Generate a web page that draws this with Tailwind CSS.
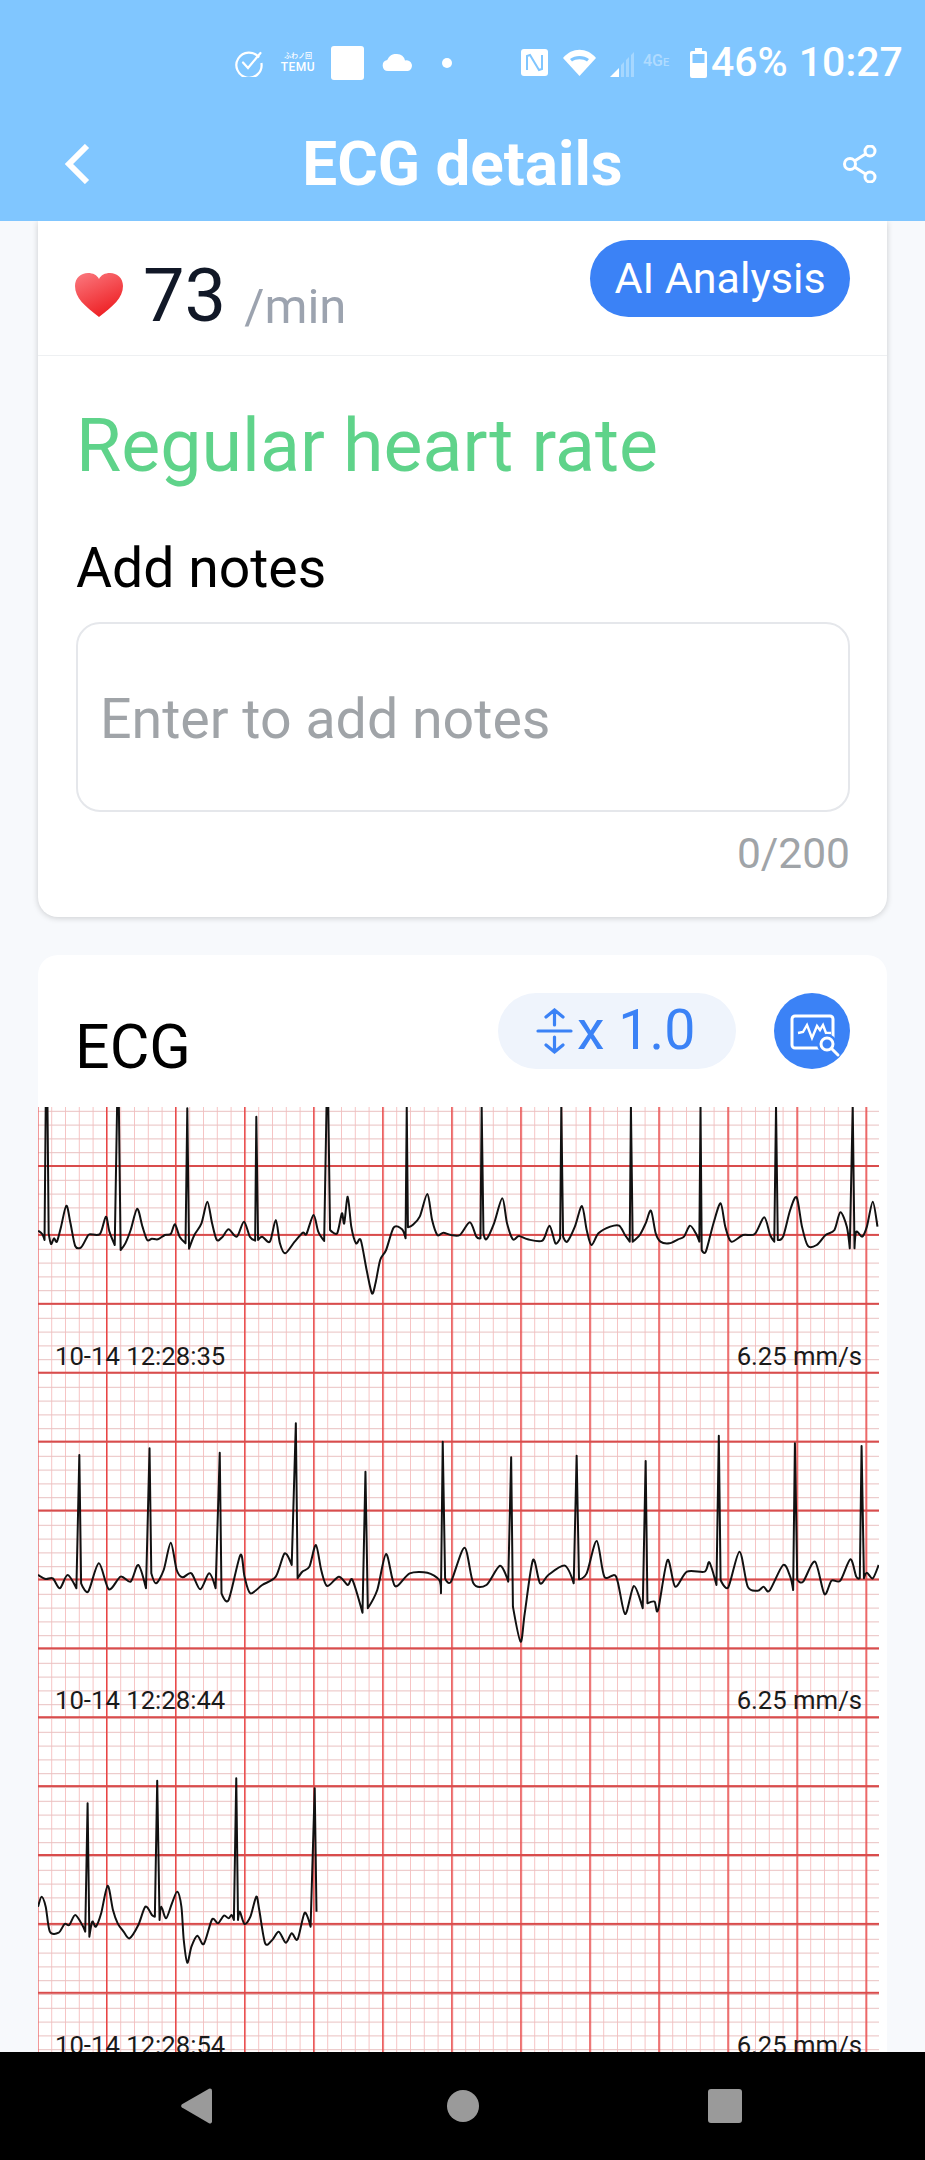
<!DOCTYPE html>
<html>
<head>
<meta charset="utf-8">
<script src="https://cdn.jsdelivr.net/npm/@tailwindcss/browser@4"></script>
</head>
<body class="m-0">
<div class="w-[925px] h-[2160px] flex flex-col overflow-hidden bg-[#f7f9fc] font-['Roboto',sans-serif]">

  <!-- status + app bar -->
  <header class="relative z-10 h-[221px] shrink-0 bg-[#80c6ff] text-white">
    <div class="h-[100px] pt-[25px] pl-[235px] flex items-center">
      <svg class="w-[28px] h-[28px]" viewBox="0 0 28 28" fill="none" stroke="white" stroke-width="2.2"><path d="M24 8.500A12.600 12.600 0 1 0 26.400 14"/><path d="M8 13.500l5 5.500L25.500 4" stroke-linecap="round"/></svg>
      <div class="ml-[18px] w-[34px] flex flex-col items-center font-medium leading-none">
        <span class="text-[7px] h-[9px] font-['Noto_Sans_CJK_JP',sans-serif] whitespace-nowrap">ふわノ回</span>
        <span class="text-[12px] tracking-[0.5px]">TEMU</span>
      </div>
      <div class="ml-[16px] w-[33px] h-[34px] bg-white rounded-[3px]"></div>
      <svg class="ml-[18px] w-[31px] h-[17px]" viewBox="0 0 31 17" fill="white"><path d="M6 17a5.500 5.500 0 0 1-.8-10.900A9 9 0 0 1 15 0a8.500 8.500 0 0 1 8 6.500A5.300 5.300 0 0 1 26 17z"/></svg>
      <div class="ml-[29px] w-[10px] h-[10px] rounded-full bg-white"></div>
      <svg class="ml-[69px] w-[27px] h-[27px]" viewBox="0 0 27 27"><rect width="27" height="27" rx="3" fill="white"/><path d="M6 21V7l3-1 9 15 3-1V6" fill="none" stroke="#80c6ff" stroke-width="2"/></svg>
      <svg class="ml-[15px] w-[33px] h-[27px]" viewBox="0 0 33 27" fill="white"><path d="M16.500 27 0 9C9-2 24-2 33 9z"/><path d="M7 10c5-4 14-4 19 0l-2 2.500c-4-3-11-3-15 0z" fill="#80c6ff"/></svg>
      <svg class="ml-[14px] w-[28px] h-[28px]" viewBox="0 0 28 28" fill="white"><path d="M0 28l9-9v9z"/><path d="M11 16l3-3v15h-3zM16 11l3-3v20h-3zM21 6l3-3v25h-3z" opacity=".3"/></svg>
      <span class="ml-[5px] w-[33px] h-[28px] text-[16px] leading-[24px] font-medium text-white/40 whitespace-nowrap">4G<span class="text-[11px]">E</span></span>
      <svg class="ml-[14px] w-[17px] h-[30px]" viewBox="0 0 17 30" fill="white"><path d="M5 0h7v3h3a2 2 0 0 1 2 2v23a2 2 0 0 1-2 2H2a2 2 0 0 1-2-2V5a2 2 0 0 1 2-2h3z"/><rect x="2.500" y="6" width="12" height="9" fill="#80c6ff"/></svg>
      <span class="ml-[4px] text-[41px] leading-none font-medium">46%</span>
      <span class="ml-[11px] text-[41px] leading-none font-medium">10:27</span>
    </div>
    <div class="h-[121px] pt-[7px] grid grid-cols-[1fr_auto_1fr] items-center">
      <div class="pl-[64px]">
        <svg class="w-[26px] h-[40px] block" viewBox="0 0 26 40" fill="none" stroke="white" stroke-width="6"><path d="M23 2 5 20l18 18"/></svg>
      </div>
      <h1 class="text-[62px] leading-none font-bold">ECG details</h1>
      <div class="flex justify-end pr-[48px]">
        <svg class="w-[34px] h-[38px] block" viewBox="0 0 34 38" fill="none" stroke="white" stroke-width="3"><circle cx="27" cy="6" r="5"/><circle cx="7" cy="19" r="5.500"/><circle cx="27" cy="32" r="5"/><path d="M11.500 16 22.500 9M11.500 22l11 7"/></svg>
      </div>
    </div>
  </header>

  <!-- scrolling content -->
  <main class="flex-1 min-h-0 overflow-hidden px-[38px]">
    <section class="bg-white rounded-b-[20px] shadow-[0_1px_6px_rgba(0,0,0,0.18)] h-[696px]">
      <div class="h-[135px] border-b border-[#eef0f2] flex justify-between pl-[37px] pr-[37px]">
        <div class="flex items-start">
          <svg class="mt-[52px] w-[48px] h-[44px]" viewBox="0 0 48 44"><defs><linearGradient id="h" x1="0" y1="0" x2=".5" y2="1"><stop offset="0" stop-color="#fb7a80"/><stop offset="1" stop-color="#ee2226"/></linearGradient></defs><path d="M24 44C10 33 0 25 0 13 0 5 6 0 13 0c5 0 9 2 11 6 2-4 6-6 11-6 7 0 13 5 13 13 0 12-10 20-24 31z" fill="url(#h)"/></svg>
          <span class="ml-[20px] mt-[32px] text-[74px] leading-[86px] text-[#111827]">73</span>
          <span class="ml-[18px] mt-[50px] text-[49px] leading-[72px] text-[#9ca3af]">/min</span>
        </div>
        <div class="mt-[19px] w-[260px] h-[77px] rounded-full bg-[#3b82f6] text-white text-[43px] flex items-center justify-center">AI Analysis</div>
      </div>
      <div class="pl-[38px] pr-[37px]">
        <p class="mt-[48px] text-[73.500px] leading-[84px] text-[#5fd38a]">Regular heart rate</p>
        <p class="mt-[49px] text-[55.300px] leading-[64px] text-black">Add notes</p>
        <div class="mt-[21px] h-[190px] rounded-[24px] border-2 border-[#e5e7eb] pl-[22px] pt-[64px] text-[55.500px] leading-[64px] text-[#a0a4a8]">Enter to add notes</div>
        <p class="mt-[18px] text-right text-[42.500px] leading-[48px] text-[#a0a4a8]">0/200</p>
      </div>
    </section>

    <section class="mt-[38px] bg-white rounded-t-[20px] h-[1100px]">
      <div class="h-[152px] flex pl-[37px] pr-[37px]">
        <h2 class="mt-[62px] text-[61px] leading-[60px] text-black">ECG</h2>
        <div class="ml-auto mt-[38px] w-[238px] h-[76px] rounded-full bg-[#eff4fc] flex items-center pl-[38px] text-[#3b82f6]">
          <svg class="w-[37px] h-[46px]" viewBox="0 0 37 46" fill="none" stroke="#3b82f6" stroke-width="3.200" stroke-linecap="round"><path d="M2 23h33M18.500 2v15M10 9l8.500-7L27 9M18.500 29v15M10 37l8.500 7 8.500-7"/></svg>
          <span class="ml-[4px] text-[55.500px] leading-none">x 1.0</span>
        </div>
        <div class="ml-[38px] mt-[38px] w-[76px] h-[76px] rounded-full bg-[#3b82f6]">
          <svg class="w-[76px] h-[76px]" viewBox="0 0 76 76" fill="none" stroke="white" stroke-width="3"><rect x="18" y="23" width="41" height="32" rx="3"/><path d="M24 40l5-1 4-7 5 13 5-12 3 4 3-5 3 8h5" stroke-width="2.400"/><circle cx="53" cy="51" r="10" fill="#3b82f6" stroke="none"/><circle cx="53" cy="51" r="6"/><path d="M57.500 55.500 64 62" stroke-linecap="round"/></svg>
        </div>
      </div>

      <div class="relative w-[841px] h-[948px]">
        <svg class="block" width="841" height="948" viewBox="0 0 841 948">
          <defs>
            <pattern id="mv" x="-0.600" y="0" width="13.800" height="948" patternUnits="userSpaceOnUse"><rect width="1" height="948" fill="#f6c4c4"/></pattern>
            <pattern id="mh" x="0" y="3.800" width="841" height="13.800" patternUnits="userSpaceOnUse"><rect width="841" height="1" fill="#e9c0c0"/></pattern>
            <pattern id="Mv" x="68" y="0" width="69.050" height="948" patternUnits="userSpaceOnUse"><rect width="1.500" height="948" fill="#e84444"/></pattern>
            <pattern id="Mh" x="0" y="58" width="841" height="68.900" patternUnits="userSpaceOnUse"><rect width="841" height="2" fill="#d94c4c"/></pattern>
          </defs>
          <rect width="841" height="948" fill="url(#mv)"/>
          <rect width="841" height="948" fill="url(#mh)"/>
          <rect width="841" height="948" fill="url(#Mv)"/>
          <rect width="841" height="948" fill="url(#Mh)"/>
          <g fill="none" stroke="#111" stroke-width="2" stroke-linejoin="round" id="traces">
            <path vector-effect="non-scaling-stroke" transform="translate(-38.300 -147) scale(.58992 .33333)" d="M65,812 L72,822 L76,840 L78,440 L81,440 L83,820 L87,852 L92,835 L97,845 L104,800 L113,737 L120,790 L128,858 L138,862 L147,835 L152,823 L170,822 L180,770 L186,815 L195,855 L199,440 L202,440 L205,870 L213,850 L222,810 L233,746 L242,800 L250,840 L258,836 L268,838 L280,825 L290,822 L297,793 L305,830 L315,850 L318,445 L321,866 L330,825 L342,790 L352,725 L360,790 L368,840 L378,830 L388,808 L402,830 L414,785 L424,830 L433,842 L435,470 L438,840 L445,830 L458,845 L468,780 L475,850 L484,880 L500,845 L514,818 L520,822 L532,765 L540,815 L550,843 L554,440 L557,440 L560,810 L572,820 L580,760 L584,790 L590,710 L596,800 L604,850 L612,840 L622,930 L631,1000 L637,970 L645,900 L655,870 L668,802 L682,808 L688,835 L690,440 L692,802 L700,795 L712,770 L725,702 L733,780 L742,825 L752,818 L765,825 L780,825 L797,787 L808,830 L815,835 L817,440 L820,820 L825,838 L838,790 L852,715 L860,790 L870,838 L880,828 L895,838 L920,842 L932,797 L942,850 L950,835 L952,440 L955,830 L962,845 L975,800 L987,738 L995,810 L1003,855 L1015,820 L1035,800 L1050,797 L1060,825 L1068,845 L1070,440 L1073,845 L1085,825 L1095,790 L1104,752 L1112,820 L1120,845 L1135,850 L1150,838 L1160,830 L1170,797 L1180,820 L1186,845 L1188,440 L1190,870 L1197,875 L1210,790 L1222,730 L1230,800 L1240,845 L1260,825 L1280,822 L1296,772 L1306,825 L1313,845 L1316,440 L1319,840 L1328,830 L1340,750 L1351,712 L1360,800 L1370,858 L1385,855 L1400,825 L1415,810 L1425,757 L1436,800 L1441,865 L1446,440 L1449,865 L1452,815 L1462,830 L1470,800 L1480,725 L1488,800"/>
            <path vector-effect="non-scaling-stroke" transform="translate(-38.300 273) scale(.58992 .33333)" d="M65,585 L78,597 L90,595 L102,625 L115,585 L130,625 L135,225 L138,610 L150,635 L168,550 L185,628 L205,590 L222,605 L235,555 L248,625 L254,205 L257,580 L265,610 L278,570 L290,488 L300,570 L310,592 L325,580 L340,628 L355,580 L366,625 L373,218 L376,640 L388,660 L408,525 L415,590 L425,640 L445,615 L468,590 L483,520 L495,555 L502,130 L505,595 L513,575 L525,560 L536,495 L545,570 L555,618 L575,590 L590,615 L598,600 L615,698 L620,275 L624,685 L640,630 L655,522 L670,618 L695,580 L725,578 L745,600 L748,640 L751,185 L755,595 L765,605 L788,503 L803,610 L825,615 L848,557 L862,605 L867,232 L870,680 L883,785 L890,700 L904,540 L916,610 L930,585 L958,557 L973,610 L978,227 L982,598 L995,580 L1012,483 L1025,590 L1045,590 L1060,702 L1075,618 L1090,685 L1095,243 L1098,670 L1110,665 L1116,690 L1132,540 L1145,620 L1165,575 L1195,575 L1203,547 L1215,615 L1219,167 L1222,600 L1235,622 L1254,515 L1268,620 L1285,632 L1295,620 L1305,632 L1328,555 L1340,590 L1345,630 L1348,190 L1352,600 L1362,605 L1382,545 L1398,642 L1410,602 L1425,602 L1442,538 L1452,590 L1458,595 L1461,198 L1465,595 L1470,578 L1480,595 L1490,555"/>
            <path vector-effect="non-scaling-stroke" transform="translate(-38.300 653) scale(.58992 .33333)" d="M65,440 L71,410 L78,440 L85,515 L100,518 L110,492 L118,495 L128,465 L140,495 L145,515 L149,130 L152,530 L157,485 L163,500 L172,460 L183,377 L192,450 L200,490 L210,515 L220,535 L235,495 L247,440 L258,465 L263,470 L267,62 L271,480 L274,440 L282,475 L292,430 L301,395 L308,440 L312,540 L318,608 L325,560 L335,527 L346,552 L360,478 L370,490 L380,467 L388,475 L393,465 L397,480 L401,55 L404,480 L407,455 L415,492 L425,470 L435,410 L440,450 L450,550 L462,540 L473,515 L485,548 L495,520 L505,538 L517,458 L527,500 L534,85 L537,455"/>
          </g>
        </svg>
        <div class="absolute left-[17px] right-[17px] top-[234px] flex justify-between text-[25.700px] leading-[30px] text-[#1a1a1a]"><span>10-14 12:28:35</span><span>6.25 mm/s</span></div>
        <div class="absolute left-[17px] right-[17px] top-[578px] flex justify-between text-[25.700px] leading-[30px] text-[#1a1a1a]"><span>10-14 12:28:44</span><span>6.25 mm/s</span></div>
        <div class="absolute left-[17px] right-[17px] top-[923px] flex justify-between text-[25.700px] leading-[30px] text-[#1a1a1a]"><span>10-14 12:28:54</span><span>6.25 mm/s</span></div>
      </div>
    </section>
  </main>

  <!-- system nav -->
  <nav class="relative z-10 h-[108px] shrink-0 bg-black flex items-center pl-[181px]">
    <svg class="w-[31px] h-[36px]" viewBox="0 0 31 36" fill="#9a9a9a"><path d="M29 .500a2 2 0 0 1 2 2v31a2 2 0 0 1-3 1.700L1 19.500a2 2 0 0 1 0-3.200L28 .800z"/></svg>
    <div class="ml-[235px] w-[32px] h-[32px] rounded-full bg-[#9a9a9a]"></div>
    <div class="ml-[229px] w-[34px] h-[34px] rounded-[3px] bg-[#9a9a9a]"></div>
  </nav>
</div>
<script>
// Round the hand-traced wave: Catmull-Rom between slow points, straight lines on the fast R spikes.
document.querySelectorAll('#traces path').forEach(function (el) {
  var p = el.getAttribute('d').replace(/[ML]/g, ' ').trim().split(/\s+/).map(function (s) { return s.split(',').map(Number); });
  var spike = function (a, b) { return Math.abs(b[1] - a[1]) > 150 && Math.abs(b[0] - a[0]) < 9; };
  var d = 'M' + p[0][0] + ',' + p[0][1];
  for (var i = 0; i < p.length - 1; i++) {
    var a = p[Math.max(i - 1, 0)], b = p[i], c = p[i + 1], e = p[Math.min(i + 2, p.length - 1)];
    if (spike(b, c)) { d += ' L' + c[0] + ',' + c[1]; continue; }
    var c1 = spike(a, b) ? b : [b[0] + (c[0] - a[0]) / 7, b[1] + (c[1] - a[1]) / 7];
    var c2 = spike(c, e) ? c : [c[0] - (e[0] - b[0]) / 7, c[1] - (e[1] - b[1]) / 7];
    d += ' C' + c1[0] + ',' + c1[1] + ' ' + c2[0] + ',' + c2[1] + ' ' + c[0] + ',' + c[1];
  }
  el.setAttribute('d', d);
});
</script>
</body>
</html>
